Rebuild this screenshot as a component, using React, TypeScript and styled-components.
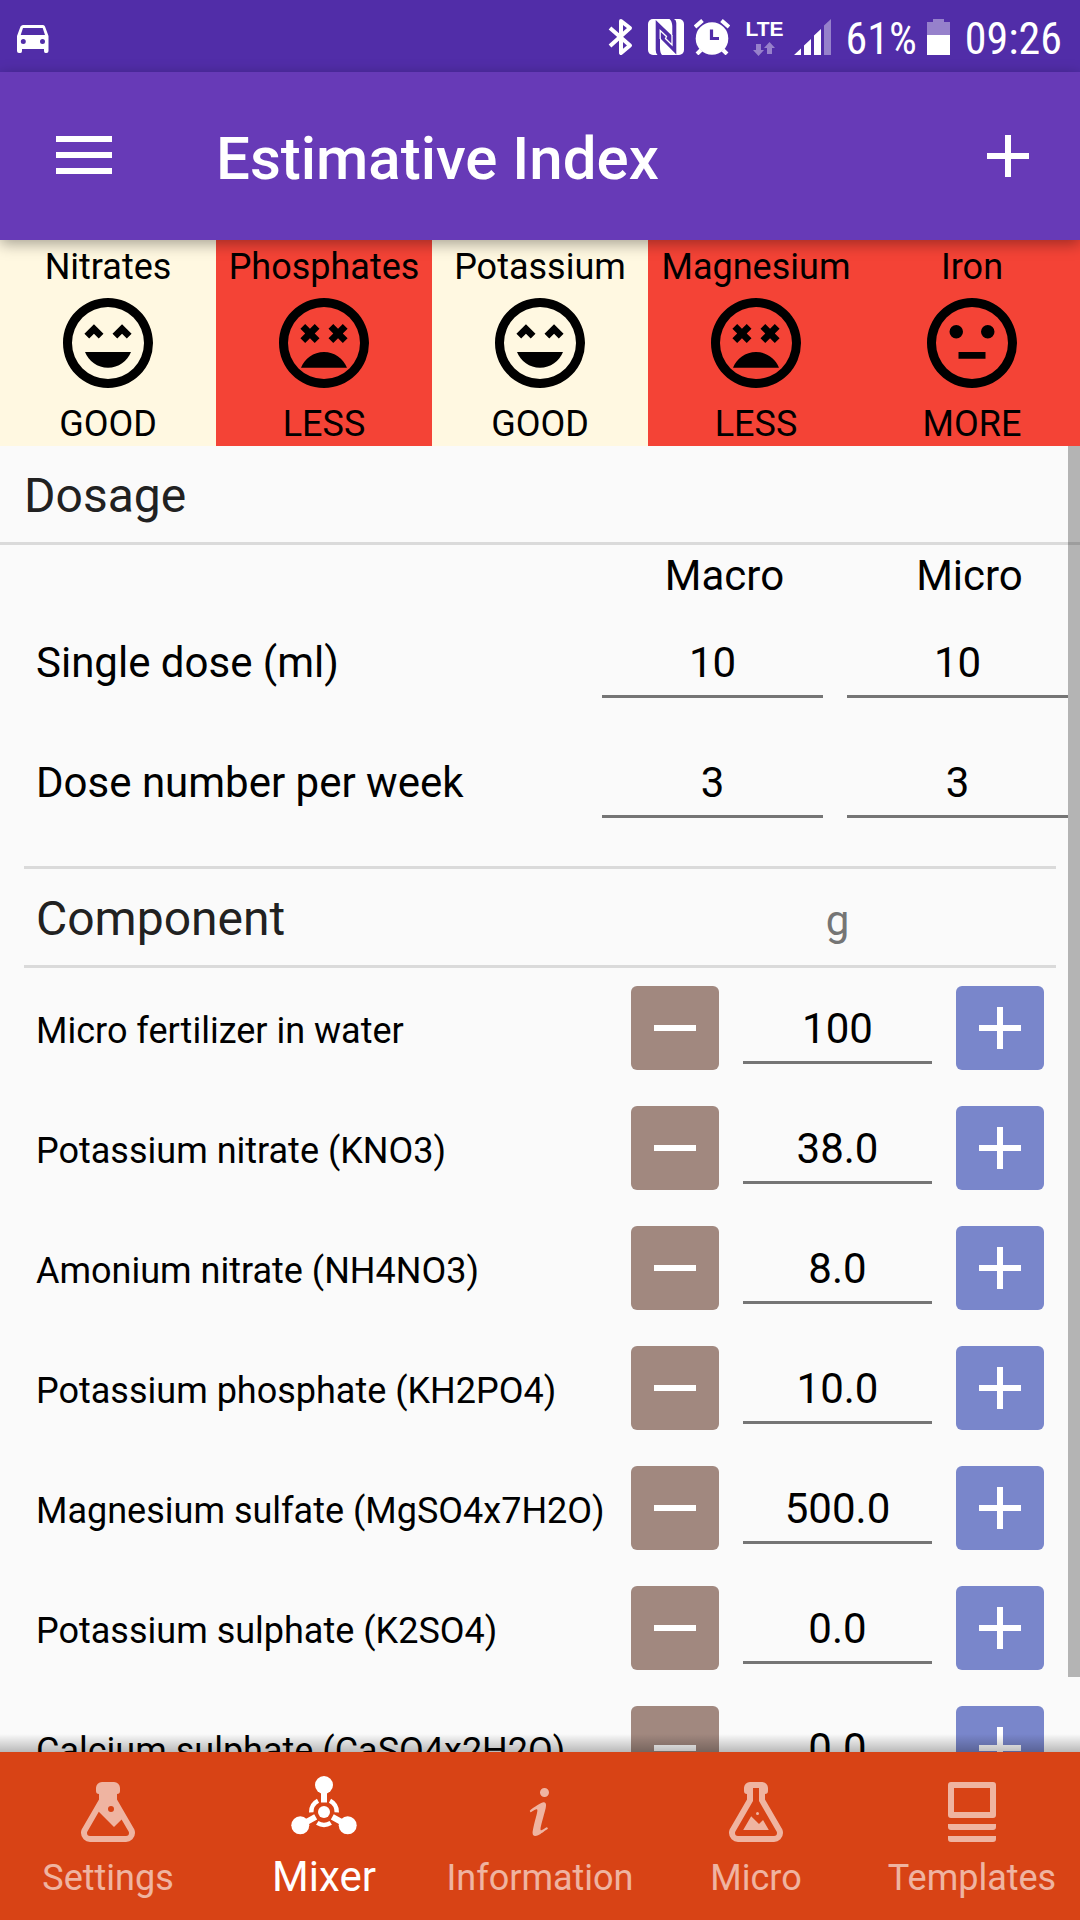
import React, { useId, useLayoutEffect, useRef, useState } from "react";
import styled, { createGlobalStyle } from "styled-components";

const color = {
  primary: "#673ab7",
  primaryDark: "#512da8",
  accent: "#d84315",
  surface: "#fafafa",
  divider: "#dadada",
  good: "#fff8e1",
  alert: "#f44336",
  minus: "#a1887f",
  plus: "#7986cb",
  underline: "#757575",
  heading: "#212121",
};

const GlobalStyle = createGlobalStyle`
  *, *::before, *::after { box-sizing: border-box; }
  body {
    margin: 0;
    font-family: Roboto, "Noto Sans", sans-serif;
    background: ${color.surface};
    color: #000;
  }
  svg { display: block; flex: none; }
`;

const Screen = styled.div`
  display: flex;
  flex-direction: column;
  height: 100vh;
  overflow: hidden;
`;

/* ---------- status bar ---------- */

const StatusBar = styled.div`
  flex: none;
  display: flex;
  align-items: center;
  justify-content: space-between;
  height: 72px;
  padding: 2px 18px 0 16px;
  background: ${color.primaryDark};
  color: #fff;
`;

const StatusTray = styled.div`
  display: flex;
  align-items: center;
  gap: 15px;
`;

const StatusGroup = styled.div`
  display: flex;
  align-items: center;
  gap: 10px;
`;

const StatusText = styled.span`
  padding-top: 4px;
  font-family: "Roboto Condensed", Roboto, sans-serif;
  font-size: 44px;
  line-height: 68px;
`;

const Network = styled.div`
  display: flex;
  flex-direction: column;
  align-items: center;
  gap: 4px;
  padding-top: 2px;
  font-family: "Liberation Sans", Roboto, sans-serif;
  font-size: 21px;
  font-weight: 700;
  line-height: 18px;
`;

/* ---------- app bar ---------- */

const AppBar = styled.header`
  position: relative;
  z-index: 2;
  flex: none;
  display: flex;
  align-items: center;
  height: 168px;
  padding-right: 24px;
  background: ${color.primary};
  color: #fff;
  box-shadow: 0 4px 14px rgba(0, 0, 0, 0.35);
`;

const Title = styled.h1`
  flex: 1;
  margin: 0;
  padding: 6px 0 0 48px;
  font-size: 60px;
  font-weight: 500;
  line-height: 72px;
`;

const BarButton = styled.button<{ $width: number }>`
  display: flex;
  align-items: center;
  justify-content: center;
  width: ${(p) => p.$width}px;
  height: 168px;
  padding: 0;
  border: 0;
  background: none;
  color: inherit;
`;

/* ---------- nutrient indicators ---------- */

const Indicators = styled.section`
  flex: none;
  display: grid;
  grid-template-columns: repeat(5, 1fr);
`;

const Indicator = styled.div<{ $ok: boolean }>`
  display: flex;
  flex-direction: column;
  align-items: center;
  padding-top: 5px;
  font-size: 36px;
  line-height: 44px;
  background: ${(p) => (p.$ok ? color.good : color.alert)};
`;

const Verdict = styled.span`
  margin-top: 5px;
`;

/* ---------- scrolling content ---------- */

const Content = styled.main`
  position: relative;
  flex: 1;
  min-height: 0;
`;

const Scroller = styled.div`
  height: 100%;
  padding-bottom: 24px;
  overflow-y: auto;
  scrollbar-width: none;
`;

const ScrollThumb = styled.div`
  position: absolute;
  top: 0;
  right: 0;
  width: 12px;
  background: rgba(0, 0, 0, 0.28);
  pointer-events: none;
`;

const SectionTitle = styled.h2`
  margin: 0;
  padding: 22px 24px 18px;
  border-bottom: 3px solid ${color.divider};
  color: ${color.heading};
  font-size: 48px;
  font-weight: 400;
  line-height: 56px;
`;

const DosageRow = styled.div`
  display: grid;
  grid-template-columns: 1fr 245px 245px;
  align-items: center;
  padding-left: 36px;
`;

const DosageHead = styled(DosageRow)`
  height: 60px;
  padding-top: 2px;
`;

const DoseValues = styled(DosageRow)`
  height: 120px;
  padding-bottom: 6px;
`;

const ColumnTitle = styled.div`
  padding-left: 24px;
  font-size: 42px;
  line-height: 52px;
  text-align: center;
`;

const DoseLabel = styled.div`
  padding-top: 2px;
  font-size: 42px;
  line-height: 52px;
`;

const DoseCell = styled.div`
  padding: 0 12px;
`;

const Field = styled.input`
  display: block;
  width: 100%;
  height: 72px;
  padding: 4px 0 0;
  border: 0;
  border-bottom: 3px solid ${color.underline};
  border-radius: 0;
  outline: 0;
  background: none;
  color: #000;
  font: inherit;
  font-size: 42px;
  text-align: center;
`;

const TableHead = styled.div`
  display: flex;
  align-items: center;
  justify-content: space-between;
  margin: 21px 24px 0;
  padding: 22px 12px 18px;
  border: solid ${color.divider};
  border-width: 3px 0;
`;

const TableTitle = styled.h2`
  margin: 0;
  color: ${color.heading};
  font-size: 48px;
  font-weight: 400;
  line-height: 56px;
`;

const Unit = styled.span`
  width: 189px;
  margin-right: 112px;
  padding-top: 4px;
  color: ${color.underline};
  font-size: 42px;
  line-height: 52px;
  text-align: center;
`;

const ComponentRow = styled.div`
  display: flex;
  align-items: center;
  gap: 24px;
  height: 120px;
  padding: 0 36px;
`;

const ComponentLabel = styled.label`
  flex: 1;
  padding-top: 6px;
  font-size: 36px;
  line-height: 44px;
  white-space: nowrap;
`;

const Amount = styled.div`
  width: 189px;
`;

const StepButton = styled.button<{ $tone: string }>`
  display: flex;
  align-items: center;
  justify-content: center;
  width: 88px;
  height: 84px;
  padding: 0;
  border: 0;
  border-radius: 6px;
  background: ${(p) => p.$tone};
  color: #fff;
`;

/* ---------- bottom navigation ---------- */

const BottomNav = styled.nav`
  position: relative;
  z-index: 2;
  flex: none;
  display: grid;
  grid-template-columns: repeat(5, 1fr);
  height: 168px;
  background: ${color.accent};

  &::before {
    content: "";
    position: absolute;
    left: 0;
    right: 0;
    bottom: 100%;
    height: 18px;
    background: linear-gradient(to top, rgba(0, 0, 0, 0.26), rgba(0, 0, 0, 0));
    pointer-events: none;
  }
`;

const Tab = styled.a<{ $active: boolean }>`
  display: flex;
  flex-direction: column;
  align-items: center;
  gap: 9px;
  padding-top: ${(p) => (p.$active ? 18 : 24)}px;
  color: #fff;
  font-size: ${(p) => (p.$active ? 42 : 36)}px;
  line-height: ${(p) => (p.$active ? 52 : 42)}px;
  text-decoration: none;

  & > * {
    opacity: ${(p) => (p.$active ? 1 : 0.6)};
  }
`;

/* ---------- icons ---------- */

const Icon = ({ size, d }: { size: number; d: string }) => (
  <svg width={size} height={size} viewBox="0 0 24 24" fill="currentColor" aria-hidden="true">
    <path d={d} />
  </svg>
);

const ring =
  "M12,2C6.47,2 2,6.47 2,12C2,17.53 6.47,22 12,22A10,10 0 0,0 22,12C22,6.47 17.5,2 12,2M12,20A8,8 0 0,1 4,12A8,8 0 0,1 12,4A8,8 0 0,1 20,12A8,8 0 0,1 12,20";

const faces = {
  GOOD:
    ring +
    "M13,9.94L14.06,11L15.12,9.94L16.18,11L17.24,9.94L15.12,7.82L13,9.94M8.88,9.94L9.94,11L11,9.94L8.88,7.82L6.76,9.94L7.82,11L8.88,9.94M12,17.5C14.33,17.5 16.31,16.04 17.11,14H6.89C7.69,16.04 9.67,17.5 12,17.5Z",
  LESS:
    ring +
    "M16.18,7.76L15.12,8.82L14.06,7.76L13,8.82L14.06,9.88L13,10.94L14.06,12L15.12,10.94L16.18,12L17.24,10.94L16.18,9.88L17.24,8.82L16.18,7.76M7.82,12L8.88,10.94L9.94,12L11,10.94L9.94,9.88L11,8.82L9.94,7.76L8.88,8.82L7.82,7.76L6.76,8.82L7.82,9.88L6.76,10.94L7.82,12M12,14C9.67,14 7.69,15.46 6.89,17.5H17.11C16.31,15.46 14.33,14 12,14Z",
  MORE:
    ring +
    "M8.5,8A1.5,1.5 0 0,0 7,9.5A1.5,1.5 0 0,0 8.5,11A1.5,1.5 0 0,0 10,9.5A1.5,1.5 0 0,0 8.5,8M15.5,8A1.5,1.5 0 0,0 14,9.5A1.5,1.5 0 0,0 15.5,11A1.5,1.5 0 0,0 17,9.5A1.5,1.5 0 0,0 15.5,8M9,14H15V15.5H9V14Z",
};

const flaskPath =
  "M6,22A3,3 0 0,1 3,19C3,18.4 3.18,17.84 3.5,17.37L9,7.81V6A1,1 0 0,1 8,5V4A2,2 0 0,1 10,2H14A2,2 0 0,1 16,4V5A1,1 0 0,1 15,6V7.81L20.5,17.37C20.82,17.84 21,18.4 21,19A3,3 0 0,1 18,22H6M5,19A1,1 0 0,0 6,20H18A1,1 0 0,0 19,19C19,18.79 18.93,18.59 18.82,18.43L16.53,14.47L14,17L8.93,11.93L5.18,18.43C5.07,18.59 5,18.79 5,19M13,10A1,1 0 0,0 12,11A1,1 0 0,0 13,12A1,1 0 0,0 14,11A1,1 0 0,0 13,10Z";
const flaskOutlinePath =
  "M5,19A1,1 0 0,0 6,20H18A1,1 0 0,0 19,19C19,18.79 18.93,18.59 18.82,18.43L13,8.35V4H11V8.35L5.18,18.43C5.07,18.59 5,18.79 5,19M6,22A3,3 0 0,1 3,19C3,18.4 3.18,17.84 3.5,17.37L9,7.81V6A1,1 0 0,1 8,5V4A2,2 0 0,1 10,2H14A2,2 0 0,1 16,4V5A1,1 0 0,1 15,6V7.81L20.5,17.37C20.82,17.84 21,18.4 21,19A3,3 0 0,1 18,22H6M13,16L14.34,14.66L16.27,18H7.73L10.39,13.39L13,16M12.5,12A0.5,0.5 0 0,1 13,12.5A0.5,0.5 0 0,1 12.5,13A0.5,0.5 0 0,1 12,12.5A0.5,0.5 0 0,1 12.5,12Z";
const infoPath =
  "M13.5,4A1.5,1.5 0 0,0 12,5.5A1.5,1.5 0 0,0 13.5,7A1.5,1.5 0 0,0 15,5.5A1.5,1.5 0 0,0 13.5,4M13.14,8.77C11.95,8.87 8.7,11.46 8.7,11.46C8.5,11.61 8.56,11.6 8.72,11.88C8.88,12.15 8.86,12.17 9.05,12.04C9.25,11.91 9.58,11.7 10.13,11.36C12.25,10 10.47,13.14 9.56,18.43C9.2,21.05 11.56,19.7 12.17,19.3C12.77,18.91 14.38,17.8 14.54,17.69C14.76,17.54 14.6,17.42 14.43,17.17C14.31,17 14.19,17.12 14.19,17.12C13.54,17.55 12.35,18.45 12.19,17.88C12,17.31 13.22,13.4 13.89,10.71C14,10.07 14.3,8.67 13.14,8.77Z";
const templatesPath =
  "M5,2H19A1,1 0 0,1 20,3V13A1,1 0 0,1 19,14H5A1,1 0 0,1 4,13V3A1,1 0 0,1 5,2M6,4V12H18V4H6M4,16H20V17A1,1 0 0,1 19,18H5A1,1 0 0,1 4,17V16M4,20H20V21A1,1 0 0,1 19,22H5A1,1 0 0,1 4,21V20Z";

const MoleculeIcon = () => (
  <svg width="72" height="72" viewBox="0 0 24 24" fill="currentColor" aria-hidden="true">
    <circle cx="12" cy="5" r="3" />
    <circle cx="4.1" cy="18.45" r="3" />
    <circle cx="19.9" cy="18.45" r="3" />
    <circle cx="12" cy="14" r="2" />
    <path
      d="M12 10.8V7M9.23 15.6L5.5 17.7M14.77 15.6L18.5 17.7"
      stroke="currentColor"
      strokeWidth="2"
      fill="none"
    />
    <path
      d="M14.25 17.6A4.25 4.25 0 0 1 9.75 17.6M7.75 14.15A4.25 4.25 0 0 1 10 10.25M14 10.25A4.25 4.25 0 0 1 16.25 14.15"
      stroke="currentColor"
      strokeWidth="1.5"
      fill="none"
    />
  </svg>
);

const MenuIcon = () => (
  <svg width="56" height="40" viewBox="0 0 56 40" fill="currentColor" aria-hidden="true">
    <path d="M0 0H56V6H0ZM0 16H56V22H0ZM0 32H56V38H0Z" />
  </svg>
);

const PlusIcon = () => (
  <svg width="42" height="42" viewBox="0 0 42 42" fill="currentColor" aria-hidden="true">
    <path d="M18 0H24V18H42V24H24V42H18V24H0V18H18Z" />
  </svg>
);

const MinusIcon = () => (
  <svg width="42" height="42" viewBox="0 0 42 42" fill="currentColor" aria-hidden="true">
    <path d="M0 18H42V24H0Z" />
  </svg>
);

const CarIcon = () => (
  <svg width="34" height="34" viewBox="0 0 34 34" fill="#fff" aria-hidden="true">
    <path
      fillRule="evenodd"
      d="M7 5H27Q28.500 5 29 6.500L32.500 16V31Q32.500 33 30.500 33H29.500Q28 33 28 31V29H6V31Q6 33 4.500 33H3Q1 33 1 31V16L4.500 6.500Q5.500 5 7 5ZM7 8L4.700 15H29L26.700 8ZM7.300 19A2.500 2.500 0 1 0 7.300 24A2.500 2.500 0 1 0 7.300 19ZM26.500 19A2.500 2.500 0 1 0 26.500 24A2.500 2.500 0 1 0 26.500 19Z"
    />
  </svg>
);

const BluetoothIcon = () => (
  <svg width="25" height="38" viewBox="0 0 25 38" fill="none" stroke="#fff" strokeWidth="4" aria-hidden="true">
    <path strokeLinejoin="round" d="M2 10L22 27.500L13 35V3L22 10L2 28" />
  </svg>
);

const NfcIcon = () => (
  <svg width="36" height="36" viewBox="0 0 36 36" aria-hidden="true">
    <rect width="36" height="36" rx="5" fill="#fff" />
    <path
      fill={color.primaryDark}
      d="M7.700 1L24.300 17V7Q24 2 21.500 0H26Q28.300 1 28.300 4V35.500L12 19V29Q12 34 14 36H9.500Q7.700 34 7.700 31Z"
    />
    <path fill="none" stroke="#fff" strokeWidth="1.300" d="M12.200 20V11.500L18.500 17.500L17.500 19.500L24 26V16" />
  </svg>
);

const AlarmIcon = () => (
  <svg width="36" height="36" viewBox="0 0 36 36" aria-hidden="true">
    <circle cx="18" cy="19.500" r="16.300" fill="#fff" />
    <path d="M1 8L8.500 1.500M35 8L27.500 1.500" stroke="#fff" strokeWidth="4" />
    <path d="M7 31L3 35M29 31L33 35" stroke="#fff" strokeWidth="4" />
    <path d="M17.500 10.500V19.500H25" fill="none" stroke={color.primaryDark} strokeWidth="3.200" />
  </svg>
);

const DataArrows = () => (
  <svg width="22" height="14" viewBox="0 0 22 14" fill="#fff" opacity="0.4" aria-hidden="true">
    <path d="M3 2H8V8H11L5.500 14L0 8H3ZM14 12H19V6H22L16.500 0L11 6H14Z" />
  </svg>
);

const SignalIcon = () => (
  <svg width="37" height="36" viewBox="0 0 37 36" fill="#fff" aria-hidden="true">
    <path d="M0 36L7 29.500V36ZM10 36V26.500L17 20V36ZM20 36V16.500L27 10V36Z" />
    <path d="M30 36V6.500L37 0V36Z" opacity="0.4" />
  </svg>
);

const BatteryIcon = () => (
  <svg width="23" height="36" viewBox="0 0 23 36" fill="#fff" aria-hidden="true">
    <path d="M6 0H17V3H23V16H0V3H6Z" opacity="0.4" />
    <path d="M0 16H23V36H0Z" />
  </svg>
);

/* ---------- data ---------- */

const indicators: { name: string; verdict: keyof typeof faces }[] = [
  { name: "Nitrates", verdict: "GOOD" },
  { name: "Phosphates", verdict: "LESS" },
  { name: "Potassium", verdict: "GOOD" },
  { name: "Magnesium", verdict: "LESS" },
  { name: "Iron", verdict: "MORE" },
];

const doses = [
  { label: "Single dose (ml)", macro: "10", micro: "10" },
  { label: "Dose number per week", macro: "3", micro: "3" },
];

const components = [
  { label: "Micro fertilizer in water", amount: 100, digits: 0 },
  { label: "Potassium nitrate (KNO3)", amount: 38, digits: 1 },
  { label: "Amonium nitrate (NH4NO3)", amount: 8, digits: 1 },
  { label: "Potassium phosphate (KH2PO4)", amount: 10, digits: 1 },
  { label: "Magnesium sulfate (MgSO4x7H2O)", amount: 500, digits: 1 },
  { label: "Potassium sulphate (K2SO4)", amount: 0, digits: 1 },
  { label: "Calcium sulphate (CaSO4x2H2O)", amount: 0, digits: 1 },
];

const tabs = [
  { label: "Settings", icon: <Icon size={72} d={flaskPath} /> },
  { label: "Mixer", icon: <MoleculeIcon />, active: true },
  { label: "Information", icon: <Icon size={72} d={infoPath} /> },
  { label: "Micro", icon: <Icon size={72} d={flaskOutlinePath} /> },
  { label: "Templates", icon: <Icon size={72} d={templatesPath} /> },
];

/* ---------- parts ---------- */

function DoseRow({ label, macro, micro }: (typeof doses)[number]) {
  const id = useId();
  return (
    <DoseValues>
      <DoseLabel id={id}>{label}</DoseLabel>
      <DoseCell>
        <Field aria-labelledby={`${id} macro`} inputMode="numeric" defaultValue={macro} />
      </DoseCell>
      <DoseCell>
        <Field aria-labelledby={`${id} micro`} inputMode="numeric" defaultValue={micro} />
      </DoseCell>
    </DoseValues>
  );
}

function Component({ label, amount, digits }: (typeof components)[number]) {
  const id = useId();
  const [value, setValue] = useState(amount.toFixed(digits));
  const step = (by: number) =>
    setValue((v) => Math.max(0, (parseFloat(v) || 0) + by).toFixed(digits));
  return (
    <ComponentRow>
      <ComponentLabel htmlFor={id}>{label}</ComponentLabel>
      <StepButton $tone={color.minus} aria-label={`Less ${label}`} onClick={() => step(-1)}>
        <MinusIcon />
      </StepButton>
      <Amount>
        <Field id={id} inputMode="decimal" value={value} onChange={(e) => setValue(e.target.value)} />
      </Amount>
      <StepButton $tone={color.plus} aria-label={`More ${label}`} onClick={() => step(1)}>
        <PlusIcon />
      </StepButton>
    </ComponentRow>
  );
}

function ScrollArea({ children }: { children: React.ReactNode }) {
  const ref = useRef<HTMLDivElement>(null);
  const [thumb, setThumb] = useState({ top: 0, height: 0 });

  useLayoutEffect(() => {
    const el = ref.current!;
    const update = () => {
      const ratio = el.clientHeight / el.scrollHeight;
      setThumb({
        top: Math.round(el.scrollTop * ratio),
        height: ratio < 1 ? Math.round(el.clientHeight * ratio) : 0,
      });
    };
    update();
    el.addEventListener("scroll", update);
    window.addEventListener("resize", update);
    return () => {
      el.removeEventListener("scroll", update);
      window.removeEventListener("resize", update);
    };
  }, []);

  return (
    <Content>
      <Scroller ref={ref}>{children}</Scroller>
      <ScrollThumb style={thumb} />
    </Content>
  );
}

export default function App() {
  return (
    <Screen>
      <GlobalStyle />
      <StatusBar>
        <CarIcon />
        <StatusTray>
          <BluetoothIcon />
          <StatusGroup>
            <NfcIcon />
            <AlarmIcon />
          </StatusGroup>
          <StatusGroup>
            <Network>
              LTE
              <DataArrows />
            </Network>
            <SignalIcon />
          </StatusGroup>
          <StatusGroup>
            <StatusText>61%</StatusText>
            <BatteryIcon />
          </StatusGroup>
          <StatusText>09:26</StatusText>
        </StatusTray>
      </StatusBar>

      <AppBar>
        <BarButton $width={168} aria-label="Menu">
          <MenuIcon />
        </BarButton>
        <Title>Estimative Index</Title>
        <BarButton $width={96} aria-label="Add">
          <PlusIcon />
        </BarButton>
      </AppBar>

      <Indicators>
        {indicators.map(({ name, verdict }) => (
          <Indicator key={name} $ok={verdict === "GOOD"}>
            <span>{name}</span>
            <Icon size={108} d={faces[verdict]} />
            <Verdict>{verdict}</Verdict>
          </Indicator>
        ))}
      </Indicators>

      <ScrollArea>
        <SectionTitle>Dosage</SectionTitle>
        <DosageHead>
          <span />
          <ColumnTitle id="macro">Macro</ColumnTitle>
          <ColumnTitle id="micro">Micro</ColumnTitle>
        </DosageHead>
        {doses.map((dose) => (
          <DoseRow key={dose.label} {...dose} />
        ))}

        <TableHead>
          <TableTitle>Component</TableTitle>
          <Unit>g</Unit>
        </TableHead>
        {components.map((item) => (
          <Component key={item.label} {...item} />
        ))}
      </ScrollArea>

      <BottomNav>
        {tabs.map(({ label, icon, active = false }) => (
          <Tab
            key={label}
            href={`#${label.toLowerCase()}`}
            $active={active}
            aria-current={active ? "page" : undefined}
          >
            {icon}
            <span>{label}</span>
          </Tab>
        ))}
      </BottomNav>
    </Screen>
  );
}
